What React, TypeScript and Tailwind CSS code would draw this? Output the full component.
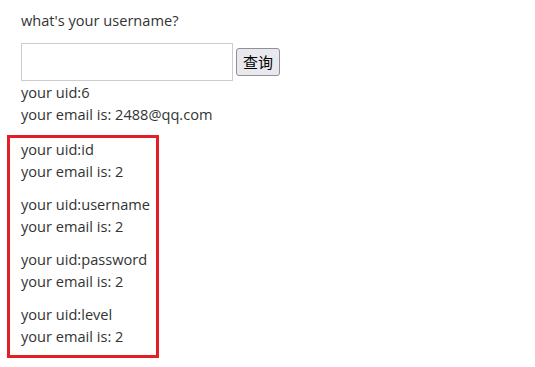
import React from "react";

const rows = ["id", "username", "password", "level"];

export default function App() {
  return (
    <div className="min-h-[367px] w-[535px] bg-white text-[14.6px] leading-[22px] text-[#333333]" style={{ fontFamily: '"Open Sans", "Noto Sans CJK SC", sans-serif' }}>
      <div className="pt-[9px] pl-[21px]">what's your username?</div>
      <div className="mt-[12px] flex items-center gap-[3px] pl-[21px]">
        <input className="h-[38px] w-[212px] border border-[#cccccc] bg-white outline-none" />
        <button className="h-[28px] w-[44px] rounded-[3px] border border-[#8f8f9d] bg-[#e9e9ed] text-[15px] leading-[20px] text-black" style={{ fontFamily: '"Noto Sans CJK SC", sans-serif' }}>
          查询
        </button>
      </div>
      <div className="pl-[21px]">
        <div>your uid:6</div>
        <div>your email is: 2488@qq.com</div>
      </div>
      <div className="ml-[7px] mt-[10px] flex w-[152px] flex-col gap-[11px] border-[3px] border-[#e31e25] pb-[8px] pl-[11px]">
        {rows.map((r) => (
          <div key={r}>
            <div>your uid:{r}</div>
            <div>your email is: 2</div>
          </div>
        ))}
      </div>
    </div>
  );
}
